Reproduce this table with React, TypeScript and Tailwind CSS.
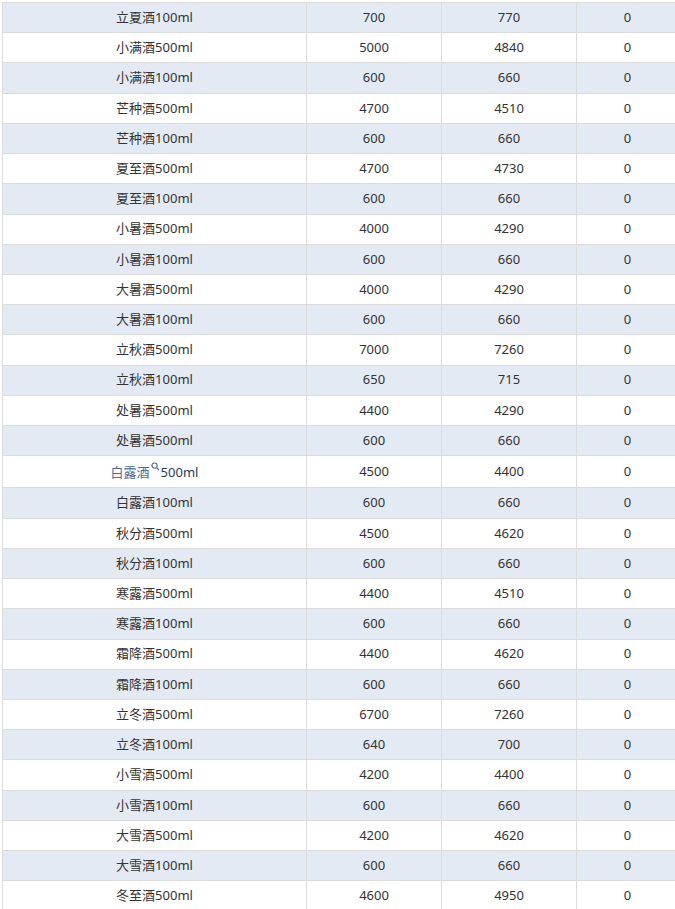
import React from "react";

type Row = [string, string, string, string];

const rows: Row[] = [
  ["立夏酒100ml", "700", "770", "0"],
  ["小满酒500ml", "5000", "4840", "0"],
  ["小满酒100ml", "600", "660", "0"],
  ["芒种酒500ml", "4700", "4510", "0"],
  ["芒种酒100ml", "600", "660", "0"],
  ["夏至酒500ml", "4700", "4730", "0"],
  ["夏至酒100ml", "600", "660", "0"],
  ["小暑酒500ml", "4000", "4290", "0"],
  ["小暑酒100ml", "600", "660", "0"],
  ["大暑酒500ml", "4000", "4290", "0"],
  ["大暑酒100ml", "600", "660", "0"],
  ["立秋酒500ml", "7000", "7260", "0"],
  ["立秋酒100ml", "650", "715", "0"],
  ["处暑酒500ml", "4400", "4290", "0"],
  ["处暑酒500ml", "600", "660", "0"],
  ["白露酒500ml", "4500", "4400", "0"],
  ["白露酒100ml", "600", "660", "0"],
  ["秋分酒500ml", "4500", "4620", "0"],
  ["秋分酒100ml", "600", "660", "0"],
  ["寒露酒500ml", "4400", "4510", "0"],
  ["寒露酒100ml", "600", "660", "0"],
  ["霜降酒500ml", "4400", "4620", "0"],
  ["霜降酒100ml", "600", "660", "0"],
  ["立冬酒500ml", "6700", "7260", "0"],
  ["立冬酒100ml", "640", "700", "0"],
  ["小雪酒500ml", "4200", "4400", "0"],
  ["小雪酒100ml", "600", "660", "0"],
  ["大雪酒500ml", "4200", "4620", "0"],
  ["大雪酒100ml", "600", "660", "0"],
  ["冬至酒500ml", "4600", "4950", "0"],
];

function SearchIcon() {
  return (
    <svg width="9" height="9" viewBox="0 0 9 9" className="inline-block relative top-[-7px] mx-[1px]">
      <circle cx="3.6" cy="3.6" r="2.6" fill="none" stroke="#5b6f94" strokeWidth="1.1" />
      <line x1="5.5" y1="5.5" x2="8" y2="8" stroke="#5b6f94" strokeWidth="1.2" />
    </svg>
  );
}

export default function App() {
  return (
    <div
      className="w-[675px] h-[909px] overflow-hidden bg-white pl-[2px] pt-[2px] text-[13px] text-[#333]"
      style={{ fontFamily: '"Noto Sans", "Noto Sans CJK SC", sans-serif' }}
    >
      <div className="w-[677px] border-l border-t border-[#dcdcdc]">
        {rows.map((r, i) => {
          const special = r[0] === "白露酒500ml" && r[1] === "4500";
          return (
            <div
              key={i}
              className={`flex border-b border-[#dcdcdc] ${i % 2 === 0 ? "bg-[#e4eaf4]" : "bg-white"} ${special ? "h-[32.2px]" : "h-[30.22px]"}`}
            >
              <div className="w-[304px] shrink-0 border-r border-[#dcdcdc] flex items-center justify-center">
                {special ? (
                  <span className="pt-[2px]">
                    <span className="text-[#4a6b9e]">白露酒</span>
                    <SearchIcon />
                    <span className="text-[#243b63]">500ml</span>
                  </span>
                ) : (
                  r[0]
                )}
              </div>
              <div className="w-[135px] shrink-0 border-r border-[#dcdcdc] flex items-center justify-center">
                {r[1]}
              </div>
              <div className="w-[135px] shrink-0 border-r border-[#dcdcdc] flex items-center justify-center">
                {r[2]}
              </div>
              <div className="w-[102px] shrink-0 border-r border-[#dcdcdc] flex items-center justify-center">
                {r[3]}
              </div>
            </div>
          );
        })}
      </div>
    </div>
  );
}
